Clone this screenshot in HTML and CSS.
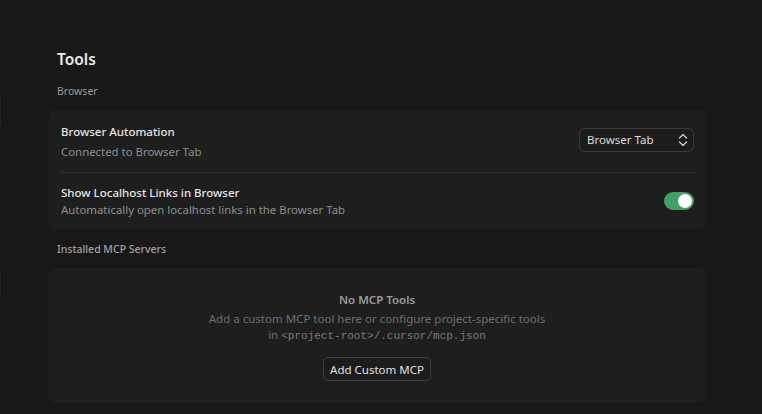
FILE: index.html
```html
<!DOCTYPE html>
<html>
<head>
<meta charset="utf-8">
<link rel="stylesheet" href="styles.css">
</head>
<body>
<div class="page">
  <div class="edge edge-a"></div>
  <div class="edge edge-b"></div>
  <main class="content">
    <h1 class="title">Tools</h1>
    <div class="section-label">Browser</div>
    <section class="card">
      <div class="row row-first">
        <div class="row-text">
          <div class="row-title">Browser Automation</div>
          <div class="row-desc">Connected to Browser Tab</div>
        </div>
        <div class="select">
          <span>Browser Tab</span>
          <svg class="chev" width="10" height="14" viewBox="0 0 10 14"><path d="M1.5 5 L5 1.5 L8.5 5 M1.5 9 L5 12.5 L8.5 9" fill="none" stroke="#cfcfcf" stroke-width="1.3" stroke-linecap="round" stroke-linejoin="round"/></svg>
        </div>
      </div>
      <div class="divider"></div>
      <div class="row row-second">
        <div class="row-text">
          <div class="row-title">Show Localhost Links in Browser</div>
          <div class="row-desc tight">Automatically open localhost links in the Browser Tab</div>
        </div>
        <div class="toggle"><div class="knob"></div></div>
      </div>
    </section>
    <div class="section-label second">Installed MCP Servers</div>
    <section class="card empty">
      <div class="empty-title">No MCP Tools</div>
      <div class="empty-desc">Add a custom MCP tool here or configure project-specific tools</div>
      <div class="empty-desc mono-line">in <code>&lt;project-root&gt;/.cursor/mcp.json</code></div>
      <button class="btn">Add Custom MCP</button>
    </section>
  </main>
</div>
</body>
</html>
```
FILE: styles.css
```css
* { box-sizing: border-box; }
html, body { margin: 0; padding: 0; }
body {
  background: #181818;
  font-family: "Noto Sans", "Open Sans", sans-serif;
  color: #d6d6d6;
  width: 762px;
  height: 414px;
  overflow: hidden;
}
.page { position: relative; width: 762px; height: 414px; }
.edge {
  position: absolute;
  left: 0;
  width: 1px;
  background: #242424;
}
.edge-a { top: 95px; height: 30px; }
.edge-b { top: 270px; height: 26px; }
.content {
  padding: 47px 0 0 48px;
  width: 706px;
}
.title {
  margin: 0 0 0 9px;
  font-size: 15.5px;
  font-weight: 600;
  color: #e8e8e8;
  line-height: 24px;
}
.section-label {
  margin: 12px 0 11px 9px;
  font-size: 10.5px;
  color: #9a9a9a;
  line-height: 16px;
  height: 16px;
}
.section-label.second { margin-top: 12px; font-weight: 500; color: #a0a0a0; }
.card {
  background: #1e1e1e;
  border-radius: 8px;
}
.row {
  display: flex;
  align-items: center;
  justify-content: space-between;
  padding: 0 12px 0 13px;
}
.row-first { height: 62px; padding-top: 2px; }
.row-second { height: 56px; }
.row-title {
  font-size: 11.5px;
  font-weight: 500;
  color: #e4e4e4;
  line-height: 16px;
}
.row-desc {
  font-size: 11.4px;
  color: #8e8e8e;
  line-height: 16px;
  margin-top: 4px;
}
.row-desc.tight { margin-top: 1px; }
.divider {
  height: 1px;
  background: #2c2c2c;
  margin: 0 12px 0 12px;
}
.select {
  width: 115px;
  height: 24px;
  margin-bottom: 5px;
  border: 1px solid #3a3a3a;
  border-radius: 6px;
  background: #1c1c1c;
  display: flex;
  align-items: center;
  justify-content: space-between;
  padding: 0 5px 0 7px;
  font-size: 11.5px;
  color: #dedede;
}
.chev { display: block; }
.toggle {
  width: 30px;
  height: 18px;
  border-radius: 9px;
  background: #3f9f66;
  position: relative;
}
.knob {
  position: absolute;
  right: 2px;
  top: 2px;
  width: 14px;
  height: 14px;
  border-radius: 50%;
  background: #ffffff;
}
.empty {
  height: 135px;
  display: flex;
  flex-direction: column;
  align-items: center;
  padding-top: 24px;
}
.empty-title {
  font-size: 11.5px;
  font-weight: 600;
  color: #9c9c9c;
  line-height: 16px;
}
.empty-desc {
  font-size: 11.5px;
  color: #6e6e6e;
  line-height: 16px;
  margin-top: 3px;
}
.empty-desc.mono-line { margin-top: 0; }
.empty-desc code {
  font-family: "Liberation Mono", "DejaVu Sans Mono", monospace;
  font-size: 11px;
  color: #7a7a7a;
}
.btn {
  margin-top: 13px;
  height: 24px;
  width: 108px;
  border: 1px solid #3c3c3c;
  border-radius: 5px;
  background: #1c1c1c;
  color: #e0e0e0;
  font-family: "Noto Sans", "Open Sans", sans-serif;
  font-size: 11.5px;
  padding: 0;
}
```
